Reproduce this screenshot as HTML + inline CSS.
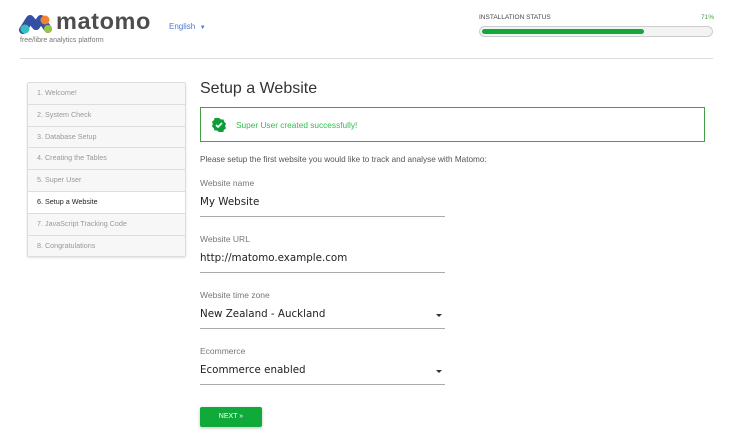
<!DOCTYPE html>
<html><head><style>
body{margin:0;width:750px;height:433px;background:#fff;font-family:"Liberation Sans",sans-serif;position:relative;overflow:hidden}
.a{position:absolute}
.side{left:27px;top:82px;width:157px;border:1px solid #ddd;border-radius:2px;box-shadow:0 1px 2px rgba(0,0,0,.12)}
.side div{height:20.8px;line-height:20.8px;border-top:1px solid #ddd;font-size:7.2px;color:#999;padding-left:9px;background:#f7f7f7}
.side div:first-child{border-top:none}
.side div.cur{background:#fff;color:#222}
.lbl{font-size:8.5px;color:#777;left:200px}
.val{font-size:10.3px;color:#222;left:200px;font-family:"DejaVu Sans",sans-serif;}
.ln{left:200px;width:245px;height:1px;background:#aaa}
.arr{left:436px;width:0;height:0;border-left:3px solid transparent;border-right:3px solid transparent;border-top:3px solid #333}
</style></head><body>
<svg class="a" style="left:19px;top:14px" width="34" height="20" viewBox="0 0 34 20">
<path d="M4 16 L11 5 L17 12" stroke="#3450a3" stroke-width="8" stroke-linecap="round" stroke-linejoin="round" fill="none"/>
<path d="M17 12 L22 5 L29 15" stroke="#3450a3" stroke-width="8" stroke-linecap="round" stroke-linejoin="round" fill="none"/>
<circle cx="6" cy="15" r="4.5" fill="#35bfc0"/><circle cx="26" cy="6" r="4.5" fill="#f38334"/><circle cx="29" cy="15" r="4" fill="#95c748"/>
</svg>
<div class="a" style="left:56px;top:8px;font-size:23.5px;font-weight:bold;color:#4d4d4d;letter-spacing:0.6px">matomo</div>
<div class="a" style="left:20px;top:37px;font-size:7px;color:#777">free/libre analytics platform</div>
<div class="a" style="left:169px;top:22px;font-size:8px;color:#4d78d6">English &nbsp;<span style="font-size:6px">▼</span></div>
<div class="a" style="left:479px;top:14px;font-size:6.5px;color:#444">INSTALLATION STATUS</div>
<div class="a" style="left:701px;top:14px;font-size:6.5px;color:#43a047">71%</div>
<div class="a" style="left:479px;top:26px;width:232px;height:9px;border:1px solid #ccc;border-radius:6px;background:#f3f3f3"></div>
<div class="a" style="left:482px;top:29px;width:162px;height:5px;border-radius:3px;background:#0faa39"></div>
<div class="a" style="left:20px;top:58px;width:693px;height:1px;background:#ddd"></div>
<div class="a side">
<div>1. Welcome!</div><div>2. System Check</div><div>3. Database Setup</div><div>4. Creating the Tables</div><div>5. Super User</div><div class="cur">6. Setup a Website</div><div>7. JavaScript Tracking Code</div><div>8. Congratulations</div>
</div>
<div class="a" style="left:200px;top:80px;font-size:16px;color:#333">Setup a Website</div>
<div class="a" style="left:200px;top:107px;width:503px;height:33px;border:1px solid #43a047"></div>
<svg class="a" style="left:212px;top:118px" width="14" height="14" viewBox="0 0 14 14"><path d="M7 0l2 1.5 2.5 0 .8 2.4 1.7 1.6-.8 2.5.8 2.5-2 1.2-.8 2.3-2.4 0L7 14l-2-1.5-2.5 0-.8-2.4L0 8.5l.8-2.5L0 3.5l2-1.2.5-2.3 2.4 0z" fill="#0f9d3a"/><path d="M4 7l2 2 4-4" stroke="#fff" stroke-width="1.6" fill="none"/></svg>
<div class="a" style="left:236px;top:120px;font-size:8.3px;color:#2fbf4a">Super User created successfully!</div>
<div class="a" style="left:200px;top:155px;font-size:8.2px;color:#555">Please setup the first website you would like to track and analyse with Matomo:</div>
<div class="a lbl" style="top:178px">Website name</div>
<div class="a val" style="top:196px">My Website</div>
<div class="a ln" style="top:216px"></div>
<div class="a lbl" style="top:234px">Website URL</div>
<div class="a val" style="top:252px">http://matomo.example.com</div>
<div class="a ln" style="top:272px"></div>
<div class="a lbl" style="top:290px">Website time zone</div>
<div class="a val" style="top:308px">New Zealand - Auckland</div>
<div class="a arr" style="top:314px"></div>
<div class="a ln" style="top:328px"></div>
<div class="a lbl" style="top:346px">Ecommerce</div>
<div class="a val" style="top:364px">Ecommerce enabled</div>
<div class="a arr" style="top:370px"></div>
<div class="a ln" style="top:384px"></div>
<div class="a" style="left:200px;top:407px;width:62px;height:20px;background:#0faa39;border-radius:2px;box-shadow:0 1px 3px rgba(0,0,0,.25);color:#fff;font-size:7px;text-align:center;line-height:20px">NEXT »</div>
</body></html>
